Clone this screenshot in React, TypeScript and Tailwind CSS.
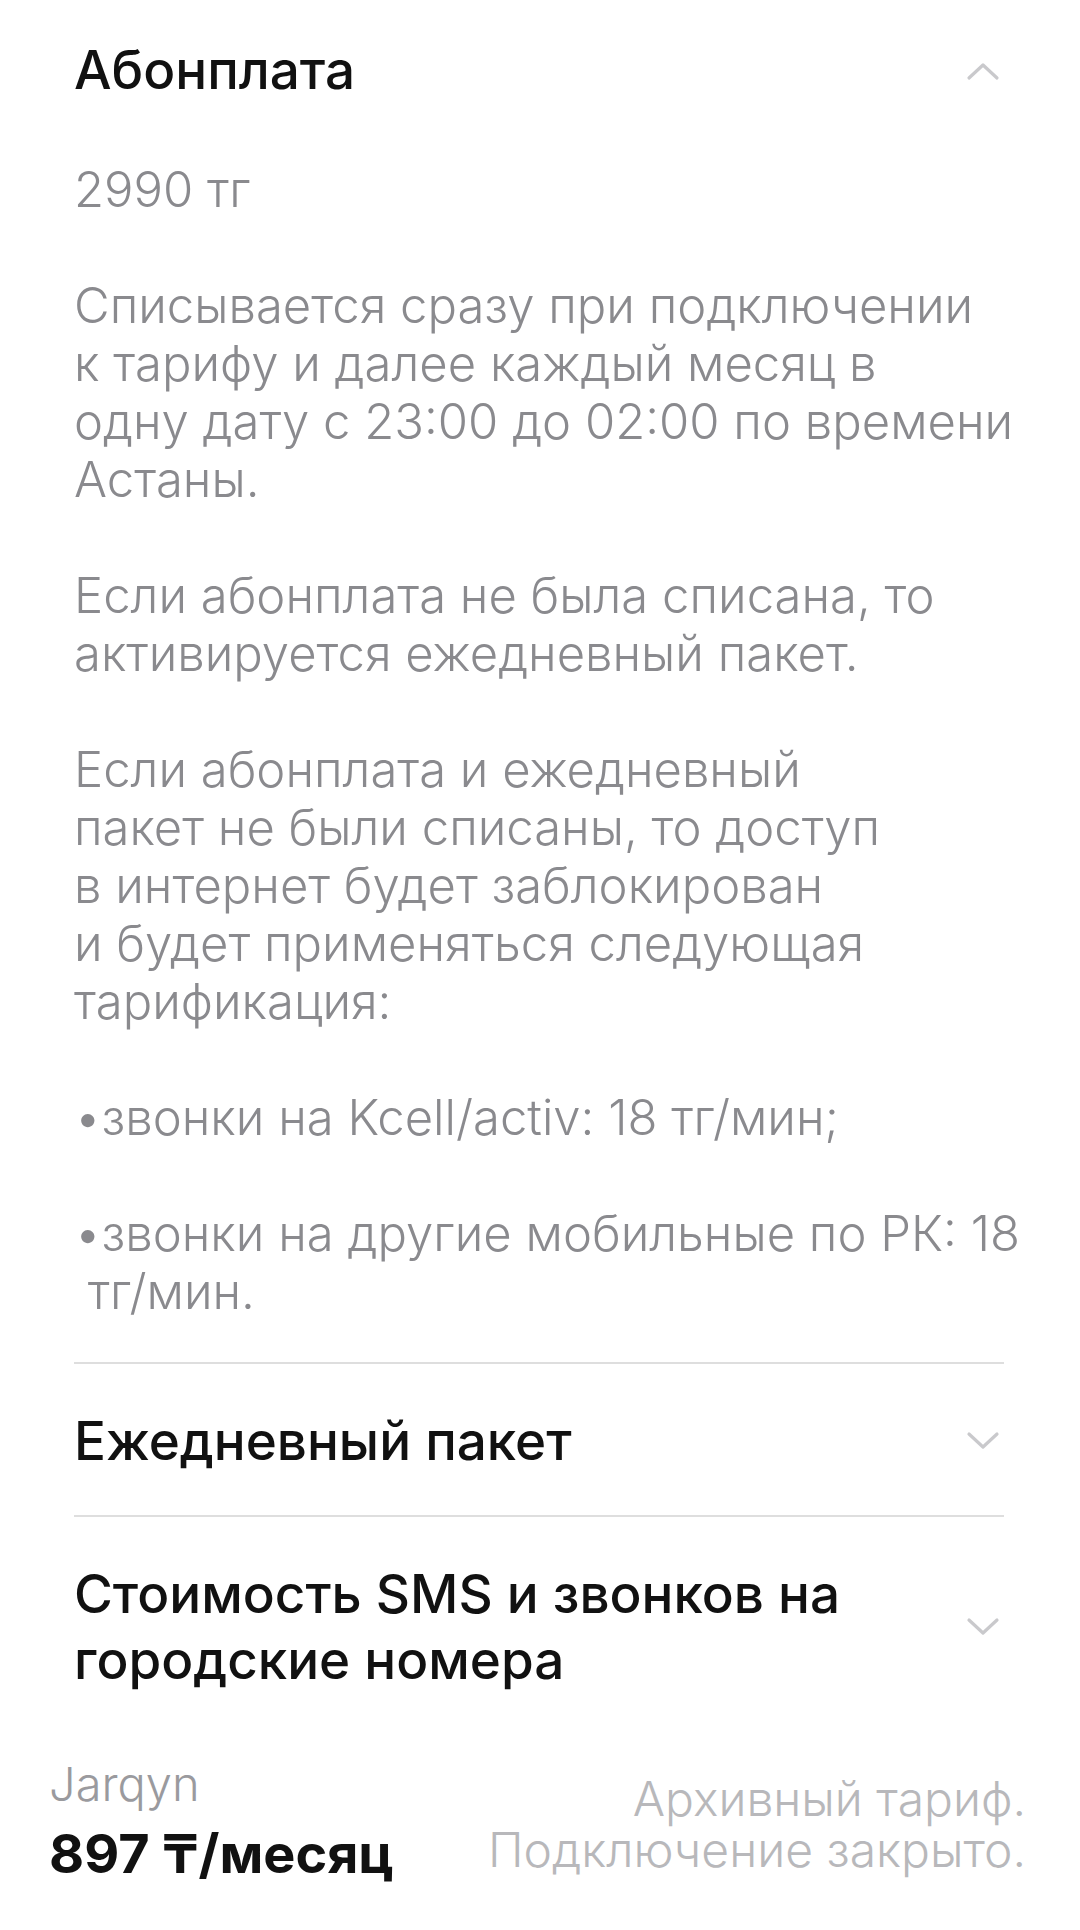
import React from 'react';

const Chevron = ({ up = false }: { up?: boolean }) => (
  <svg width="34" height="20" viewBox="0 0 34 20" fill="none" className="shrink-0 mr-[4px]">
    <polyline
      points={up ? '3,17 17,4 31,17' : '3,3 17,16 31,3'}
      stroke="#c9c9cc"
      strokeWidth="3.2"
      strokeLinecap="round"
      strokeLinejoin="round"
    />
  </svg>
);

const Lines = ({ lines }: { lines: string[] }) => (
  <p>
    {lines.map((l, i) => (
      <span key={i} className="block whitespace-nowrap">
        {l}
      </span>
    ))}
  </p>
);

export default function App() {
  return (
    <div className="min-h-[1930px] bg-white flex flex-col font-['Inter','Noto_Sans',sans-serif] antialiased">
      <div className="pl-[74px] pr-[76px]">
        {/* Абонплата, expanded */}
        <section className="pt-[37px] pb-[41px] border-b-2 border-[#dedede]">
          <div className="flex items-center justify-between">
            <h2 className="text-[53px] leading-[67px] font-medium text-[#111]">Абонплата</h2>
            <Chevron up />
          </div>
          <div className="mt-[57px] text-[49px] leading-[58px] text-[#8a8a8e] font-light flex flex-col gap-[58px]">
            <p>2990 тг</p>
            <Lines
              lines={[
                'Списывается сразу при подключении',
                'к тарифу и далее каждый месяц в',
                'одну дату с 23:00 до 02:00 по времени',
                'Астаны.',
              ]}
            />
            <Lines
              lines={['Если абонплата не была списана, то', 'активируется ежедневный пакет.']}
            />
            <Lines
              lines={[
                'Если абонплата и ежедневный',
                'пакет не были списаны, то доступ',
                'в интернет будет заблокирован',
                'и будет применяться следующая',
                'тарификация:',
              ]}
            />
            <p className="whitespace-nowrap">•звонки на Kcell/activ: 18 тг/мин;</p>
            <Lines lines={['•звонки на другие мобильные по РК: 18', '\u00a0тг/мин.']} />
          </div>
        </section>

        <section className="pt-[44px] pb-[41px] border-b-2 border-[#dedede] flex items-center justify-between">
          <h2 className="text-[53px] leading-[66px] font-medium text-[#111]">Ежедневный пакет</h2>
          <Chevron />
        </section>

        <section className="pt-[44px] pb-[40px] flex items-center justify-between">
          <h2 className="text-[53px] leading-[66px] font-medium text-[#111]">
            Стоимость SMS и звонков на
            <br />
            городские номера
          </h2>
          <Chevron />
        </section>
      </div>

      <footer className="mt-[22px] pl-[49px] pr-[54px] flex items-start justify-between">
        <div>
          <div className="text-[47px] leading-[58px] text-[#9a9a9e] font-light">Jarqyn</div>
          <div className="mt-[8px] text-[54px] leading-[66px] font-bold text-[#111]">897 ₸/месяц</div>
        </div>
        <div className="pt-[18px] text-right text-[48px] leading-[51px] text-[#b8b8bb] font-light">
          <div>Архивный тариф.</div>
          <div>Подключение закрыто.</div>
        </div>
      </footer>
    </div>
  );
}
